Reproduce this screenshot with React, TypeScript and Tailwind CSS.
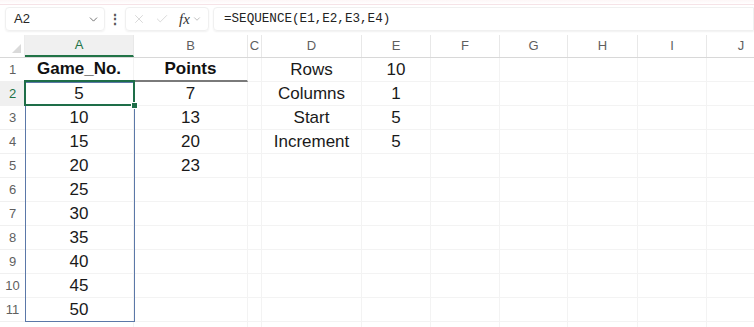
import { ChevronDown, X, Check } from "lucide-react";

const cols = [
    { k: "A", w: 109 },
    { k: "B", w: 114 },
    { k: "C", w: 14 },
    { k: "D", w: 100 },
    { k: "E", w: 69 },
    { k: "F", w: 69 },
    { k: "G", w: 68 },
    { k: "H", w: 70 },
    { k: "I", w: 69 },
    { k: "J", w: 69 },
];

const data: Record<number, Record<string, string>> = {
    1: { A: "Game_No.", B: "Points", D: "Rows", E: "10" },
    2: { A: "5", B: "7", D: "Columns", E: "1" },
    3: { A: "10", B: "13", D: "Start", E: "5" },
    4: { A: "15", B: "20", D: "Increment", E: "5" },
    5: { A: "20", B: "23" },
    6: { A: "25" },
    7: { A: "30" },
    8: { A: "35" },
    9: { A: "40" },
    10: { A: "45" },
    11: { A: "50" },
    12: {},
};

export default function App() {
    const rows = Object.keys(data).map(Number);

    return (
        <div className="w-[754px] h-[327px] overflow-hidden bg-white font-['Liberation_Sans',Arial,sans-serif]">
            <div className="h-[5px] border-b border-[#f6e3e7] bg-gradient-to-b from-[#fdf6f7] to-white" />

            {/* formula bar */}
            <div className="flex items-center h-[24px] mt-[2px] pl-[5px] gap-[4px]">
                <div className="flex items-center justify-between w-[100px] h-[24px] pl-[8px] pr-[4px] rounded-[4px] border border-[#f0f0f0] shadow-[0_1px_2px_rgba(0,0,0,0.06)] text-[13px] text-[#262626]">
                    <span>A2</span>
                    <ChevronDown className="w-[13px] h-[13px] text-[#555]" strokeWidth={1.5} />
                </div>
                <div className="w-[12px] flex justify-center text-[14px] text-[#555] font-bold leading-none">⋮</div>
                <div className="flex items-center w-[84px] h-[24px] pl-[6px] rounded-[4px] border border-[#f0f0f0] shadow-[0_1px_2px_rgba(0,0,0,0.06)]">
                    <X className="w-[14px] h-[14px] text-[#c8c8c8]" strokeWidth={1.2} />
                    <Check className="w-[14px] h-[14px] ml-[9px] text-[#c8c8c8]" strokeWidth={1.2} />
                    <span className="ml-[10px] text-[15px] italic text-[#333] font-['Liberation_Serif',serif] leading-none">fx</span>
                    <ChevronDown className="w-[10px] h-[10px] ml-[2px] text-[#999]" strokeWidth={1.5} />
                </div>
                <div className="flex-1 flex items-center h-[24px] pl-[10px] rounded-l-[4px] border border-[#f0f0f0] shadow-[0_1px_2px_rgba(0,0,0,0.06)] text-[12.6px] text-[#222] font-['Liberation_Mono',monospace]">
                    =SEQUENCE(E1,E2,E3,E4)
                </div>
            </div>

            {/* column headers */}
            <div className="flex mt-[4px] h-[23px] border-b border-[#d8d8d8]">
                <div className="w-[25px] shrink-0 relative border-r border-[#ececec]">
                    <div className="absolute right-[3px] bottom-[4px] w-0 h-0 border-l-[9px] border-l-transparent border-b-[9px] border-b-[#dadada]" />
                </div>
                {cols.map(c => (
                    <div
                        key={c.k}
                        style={{ width: c.w }}
                        className={
                            c.k === "A"
                                ? "shrink-0 flex items-center justify-center text-[13px] text-[#217346] bg-[#f0f0f0] border-b-2 border-[#217346] border-r border-r-[#e8e8e8]"
                                : "shrink-0 flex items-center justify-center text-[13px] text-[#5f5f5f] border-r border-[#e8e8e8]"
                        }
                    >
                        {c.k}
                    </div>
                ))}
            </div>

            {/* grid */}
            <div className="relative">
                {rows.map(r => (
                    <div key={r} className="flex h-[24px]">
                        <div
                            className={
                                r === 2
                                    ? "w-[25px] shrink-0 flex items-center justify-center text-[13px] text-[#217346] bg-[#f0f0f0] border-b border-[#f0f0f0]"
                                    : "w-[25px] shrink-0 flex items-center justify-center text-[13px] text-[#5f5f5f] border-b border-[#f0f0f0]"
                            }
                        >
                            {r < 12 ? r : ""}
                        </div>
                        {cols.map(c => {
                            const v = data[r][c.k];
                            return (
                                <div
                                    key={c.k}
                                    style={{ width: c.w }}
                                    className={
                                        r === 1 && (c.k === "A" || c.k === "B")
                                            ? "shrink-0 flex items-center justify-center text-[17px] font-bold text-[#111] border-b-2 border-b-[#7a7a7a] border-r border-r-[#f3f3f3]"
                                            : "shrink-0 flex items-center justify-center text-[17px] text-[#1a1a1a] border-b border-b-[#f3f3f3] border-r border-r-[#f3f3f3]"
                                    }
                                >
                                    {v}
                                </div>
                            );
                        })}
                    </div>
                ))}

                {/* spill range outline A2:A11 */}
                <div className="absolute left-[25px] top-[24px] w-[110px] h-[240px] border border-[#5b78a8] pointer-events-none" />
                {/* active cell A2 */}
                <div className="absolute left-[24px] top-[22px] w-[111px] h-[26px] border-2 border-[#1e6e48] pointer-events-none" />
                <div className="absolute left-[131px] top-[44px] w-[7px] h-[7px] bg-[#1e6e48] border border-white pointer-events-none" />
            </div>
        </div>
    );
}
